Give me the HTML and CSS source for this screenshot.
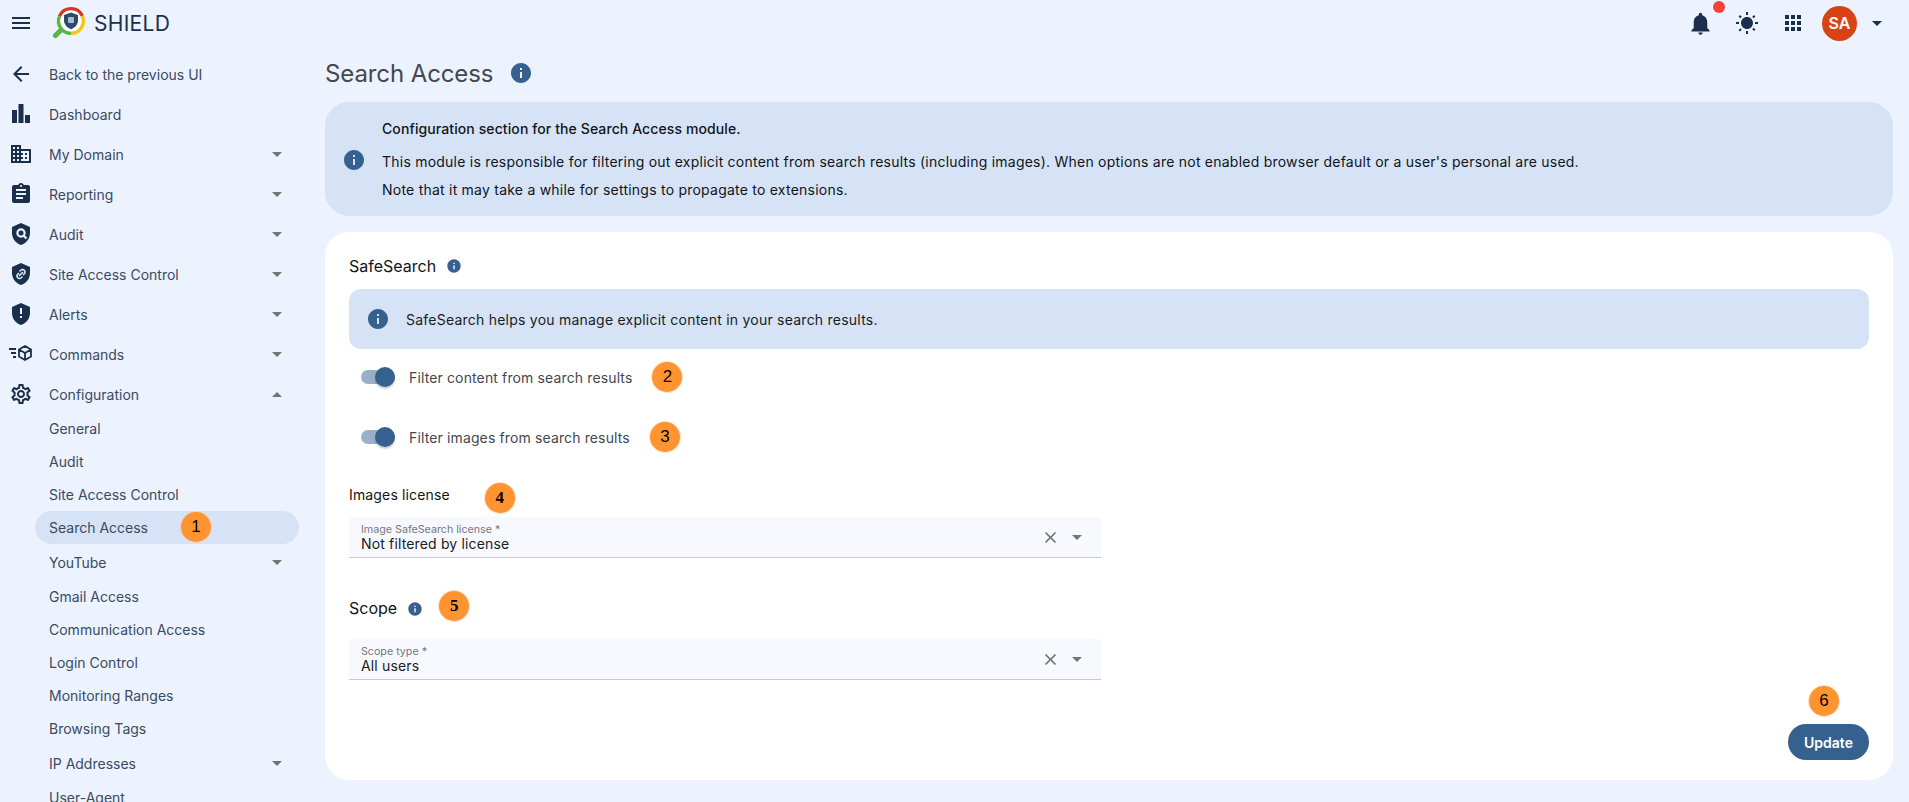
FILE: index.html
```html
<!DOCTYPE html>
<html lang="en">
<head>
<meta charset="utf-8">
<title>SHIELD - Search Access</title>
<link rel="stylesheet" href="styles.css">
</head>
<body>
<svg class="defs" aria-hidden="true">
  <symbol id="i-info" viewBox="0 0 24 24"><path d="M12 2C6.48 2 2 6.48 2 12s4.48 10 10 10 10-4.48 10-10S17.52 2 12 2zm1 15h-2v-6h2v6zm0-8h-2V7h2v2z"/></symbol>
  <symbol id="i-close" viewBox="0 0 24 24"><path d="M19 6.41 17.59 5 12 10.59 6.41 5 5 6.41 10.59 12 5 17.59 6.41 19 12 13.41 17.59 19 19 17.59 13.41 12z"/></symbol>
</svg>

<header class="topbar">
  <svg class="icon" viewBox="0 0 24 24"><path d="M3 18h18v-2H3v2zm0-5h18v-2H3v2zm0-7v2h18V6H3z"/></svg>
  <svg class="logo" viewBox="0 0 34 34">
    <path d="M9 24 3.5 29.5" stroke="#5cb346" stroke-width="5" stroke-linecap="round" fill="none"/>
    <circle cx="19" cy="15" r="13.5" fill="#fff"/>
    <path d="M7.4 10.5A12.4 12.4 0 0 1 30.3 10" stroke="#d8352a" stroke-width="3.4" fill="none"/>
    <path d="M30.3 10A12.4 12.4 0 0 1 19 27.4" stroke="#f5c518" stroke-width="3.4" fill="none"/>
    <path d="M19 27.4A12.4 12.4 0 0 1 7.4 10.5" stroke="#5cb346" stroke-width="3.4" fill="none"/>
    <path d="M19 6.5l7 2.6v5.2c0 4.3-3 7.6-7 8.9-4-1.300-7-4.600-7-8.900V9.100z" fill="#2c4a6b"/>
    <rect x="16" y="11" width="6" height="6" rx="1" fill="#a9bccf"/>
  </svg>
  <span class="brand">SHIELD</span>
  <div class="topbar-actions">
    <div class="bell">
      <svg class="bell-icon" viewBox="0 0 24 24"><path d="M12 22c1.100 0 2-.9 2-2h-4c0 1.100.89 2 2 2zm6-6v-5c0-3.070-1.640-5.640-4.500-6.320V4c0-.83-.67-1.500-1.500-1.500s-1.500.67-1.500 1.500v.68C7.630 5.360 6 7.920 6 11v5l-2 2v1h16v-1l-2-2z"/></svg>
      <span class="dot"></span>
    </div>
    <svg class="icon" viewBox="0 0 24 24"><path d="M6.760 5.840l-1.800-1.790-1.410 1.410 1.790 1.790 1.420-1.410zM4 11H1v2h3v-2zm9-10h-2v3h2V1zm7.450 4.460l-1.410-1.410-1.790 1.790 1.410 1.410 1.790-1.790zm-3.210 12.700l1.790 1.800 1.410-1.410-1.800-1.790-1.400 1.400zM20 11v2h3v-2h-3zm-8-5c-3.310 0-6 2.690-6 6s2.690 6 6 6 6-2.690 6-6-2.690-6-6-6zm-1 17h2v-3h-2v3zm-7.450-3.960l1.410 1.410 1.790-1.800-1.410-1.410-1.790 1.800z"/></svg>
    <svg class="icon" viewBox="0 0 24 24"><path d="M4 8h4V4H4v4zm6 12h4v-4h-4v4zm-6 0h4v-4H4v4zm0-6h4v-4H4v4zm6 0h4v-4h-4v4zm6-10v4h4V4h-4zm-6 4h4V4h-4v4zm6 6h4v-4h-4v4zm0 6h4v-4h-4v4z"/></svg>
    <span class="avatar">SA</span>
    <span class="caret caret-dark"></span>
  </div>
</header>

<div class="layout">
  <nav class="sidebar">
    <a class="nav-row"><svg class="icon" viewBox="0 0 24 24"><path d="M20 11H7.830l5.590-5.590L12 4l-8 8 8 8 1.410-1.410L7.830 13H20v-2z"/></svg><span class="nav-label">Back to the previous UI</span></a>
    <a class="nav-row"><svg class="icon" viewBox="0 0 24 24"><path d="M3 8h5v13H3zM9.500 2h5v19h-5zM16 13h5v8h-5z"/></svg><span class="nav-label">Dashboard</span></a>
    <a class="nav-row"><svg class="icon" viewBox="0 0 24 24"><path d="M12 7V3H2v18h20V7H12zM6 19H4v-2h2v2zm0-4H4v-2h2v2zm0-4H4V9h2v2zm0-4H4V5h2v2zm4 12H8v-2h2v2zm0-4H8v-2h2v2zm0-4H8V9h2v2zm0-4H8V5h2v2zm10 12h-8v-2h2v-2h-2v-2h2v-2h-2V9h8v10zm-2-8h-2v2h2v-2zm0 4h-2v2h2v-2z"/></svg><span class="nav-label">My Domain</span><span class="caret"></span></a>
    <a class="nav-row"><svg class="icon" viewBox="0 0 24 24"><path d="M19 3h-4.180C14.400 1.840 13.300 1 12 1c-1.300 0-2.400.84-2.820 2H5c-1.100 0-2 .9-2 2v14c0 1.100.9 2 2 2h14c1.100 0 2-.9 2-2V5c0-1.100-.9-2-2-2zm-7 0c.55 0 1 .45 1 1s-.45 1-1 1-1-.45-1-1 .45-1 1-1zm2 14H7v-2h7v2zm3-4H7v-2h10v2zm0-4H7V7h10v2z"/></svg><span class="nav-label">Reporting</span><span class="caret"></span></a>
    <a class="nav-row"><svg class="icon" viewBox="0 0 24 24"><path d="M12 1 3 5v6c0 5.550 3.840 10.740 9 12 5.160-1.260 9-6.450 9-12V5l-9-4z"/><circle class="cut" cx="12" cy="11" r="3.600"/><path class="cut" d="m14.500 13.500 3 3"/></svg><span class="nav-label">Audit</span><span class="caret"></span></a>
    <a class="nav-row"><svg class="icon" viewBox="0 0 24 24"><path d="M12 1 3 5v6c0 5.550 3.840 10.740 9 12 5.160-1.260 9-6.450 9-12V5l-9-4z"/><path class="cut thin" d="M10.500 9.500 12 8a2.500 2.500 0 0 1 3.500 3.500L14 13M13.500 14.500 12 16a2.500 2.500 0 0 1-3.500-3.500L10 11M10 14l4-4"/></svg><span class="nav-label">Site Access Control</span><span class="caret"></span></a>
    <a class="nav-row"><svg class="icon" viewBox="0 0 24 24"><path d="M12 1 3 5v6c0 5.550 3.840 10.740 9 12 5.160-1.260 9-6.450 9-12V5l-9-4zm1 15h-2v-2h2v2zm0-4h-2V6h2v6z"/></svg><span class="nav-label">Alerts</span><span class="caret"></span></a>
    <a class="nav-row"><svg class="icon" viewBox="0 0 24 24"><path class="line" d="M0 7h7M2 11h5M4 15h3M16 4l6 3.500v7L16 18l-6-3.500v-7zM10 7.500l6 3.500 6-3.500M16 11v7"/></svg><span class="nav-label">Commands</span><span class="caret"></span></a>
    <a class="nav-row"><svg class="icon" viewBox="0 0 24 24"><path d="M19.430 12.980c.04-.32.07-.64.07-.98 0-.34-.03-.66-.07-.98l2.110-1.650c.19-.15.24-.42.12-.64l-2-3.460c-.09-.16-.26-.25-.44-.25-.06 0-.12.01-.17.03l-2.490 1c-.52-.4-1.080-.73-1.690-.98l-.38-2.650C14.460 2.180 14.250 2 14 2h-4c-.25 0-.46.18-.49.42l-.38 2.650c-.61.25-1.170.59-1.690.98l-2.490-1c-.06-.02-.12-.03-.18-.03-.17 0-.34.09-.43.25l-2 3.460c-.13.22-.07.49.12.64l2.110 1.650c-.04.32-.07.65-.07.98 0 .33.03.66.07.98l-2.110 1.650c-.19.15-.24.42-.12.64l2 3.460c.09.16.26.25.44.25.06 0 .12-.01.17-.03l2.490-1c.52.4 1.080.73 1.690.98l.38 2.650c.03.24.24.42.49.42h4c.25 0 .46-.18.49-.42l.38-2.650c.61-.25 1.170-.59 1.690-.98l2.490 1c.06.02.12.03.18.03.17 0 .34-.09.43-.25l2-3.460c.12-.22.07-.49-.12-.64l-2.110-1.650zm-1.980-1.710c.04.31.05.52.05.73 0 .21-.02.43-.05.73l-.14 1.130.89.7 1.080.84-.7 1.210-1.270-.51-1.040-.42-.9.68c-.43.32-.84.56-1.250.73l-1.060.43-.16 1.130-.2 1.350h-1.400l-.19-1.350-.16-1.130-1.060-.43c-.43-.18-.83-.41-1.230-.71l-.91-.7-1.060.43-1.270.51-.7-1.210 1.080-.84.89-.7-.14-1.130c-.03-.31-.05-.54-.05-.74s.02-.43.05-.73l.14-1.130-.89-.7-1.080-.84.7-1.210 1.270.51 1.040.42.9-.68c.43-.32.84-.56 1.250-.73l1.060-.43.16-1.130.2-1.350h1.390l.19 1.350.16 1.130 1.060.43c.43.18.83.41 1.230.71l.91.7 1.060-.43 1.270-.51.7 1.210-1.070.85-.89.7.14 1.130zM12 8c-2.210 0-4 1.790-4 4s1.790 4 4 4 4-1.790 4-4-1.790-4-4-4zm0 6c-1.100 0-2-.9-2-2s.9-2 2-2 2 .9 2 2-.9 2-2 2z"/></svg><span class="nav-label">Configuration</span><span class="caret caret-up"></span></a>
    <div class="subnav">
      <a class="sub-row">General</a>
      <a class="sub-row">Audit</a>
      <a class="sub-row">Site Access Control</a>
      <a class="sub-row sub-active">Search Access<span class="step step-nav">1</span></a>
      <a class="sub-row sub-tall">YouTube<span class="caret"></span></a>
      <a class="sub-row">Gmail Access</a>
      <a class="sub-row">Communication Access</a>
      <a class="sub-row">Login Control</a>
      <a class="sub-row">Monitoring Ranges</a>
      <a class="sub-row">Browsing Tags</a>
      <a class="sub-row sub-tall">IP Addresses<span class="caret"></span></a>
      <a class="sub-row">User-Agent</a>
    </div>
  </nav>

  <main class="main">
    <div class="page-title">
      <h1>Search Access</h1>
      <svg class="info info-lg"><use href="#i-info"/></svg>
    </div>

    <section class="banner">
      <svg class="info info-lg"><use href="#i-info"/></svg>
      <div class="banner-text">
        <p class="banner-lead">Configuration section for the Search Access module.</p>
        <p class="banner-body">This module is responsible for filtering out explicit content from search results (including images). When options are not enabled browser default or a user's personal are used.</p>
        <p class="banner-note">Note that it may take a while for settings to propagate to extensions.</p>
      </div>
    </section>

    <section class="card">
      <div class="section-head">
        <h2>SafeSearch</h2>
        <svg class="info info-sm"><use href="#i-info"/></svg>
      </div>
      <div class="alert">
        <svg class="info info-lg"><use href="#i-info"/></svg>
        <span>SafeSearch helps you manage explicit content in your search results.</span>
      </div>
      <div class="toggle-row">
        <span class="toggle"><span class="thumb"></span></span>
        <span class="toggle-label">Filter content from search results</span>
        <span class="step">2</span>
      </div>
      <div class="toggle-row toggle-row-next">
        <span class="toggle"><span class="thumb"></span></span>
        <span class="toggle-label">Filter images from search results</span>
        <span class="step">3</span>
      </div>

      <div class="field-head field-head-license">
        <h3>Images license</h3>
        <span class="step step-serif">4</span>
      </div>
      <div class="field field-license">
        <div class="field-text">
          <span class="field-label">Image SafeSearch license *</span>
          <span class="field-value">Not filtered by license</span>
        </div>
        <svg class="clear"><use href="#i-close"/></svg>
        <span class="caret"></span>
      </div>

      <div class="field-head field-head-scope">
        <h2>Scope</h2>
        <svg class="info info-sm"><use href="#i-info"/></svg>
        <span class="step step-serif">5</span>
      </div>
      <div class="field field-scope">
        <div class="field-text">
          <span class="field-label">Scope type *</span>
          <span class="field-value">All users</span>
        </div>
        <svg class="clear"><use href="#i-close"/></svg>
        <span class="caret"></span>
      </div>

      <div class="card-actions">
        <span class="step step-action">6</span>
        <button class="btn" type="button">Update</button>
      </div>
    </section>
  </main>
</div>
</body>
</html>
```
FILE: styles.css
```css
* { box-sizing: border-box; }

html, body {
  margin: 0;
  height: 802px;
  overflow: hidden;
}

body {
  background: #ecf2fe;
  font-family: Inter, "Liberation Sans", sans-serif;
  font-size: 14px;
  color: #101418;
}

.defs { width: 0; height: 0; position: absolute; }

h1, h2, h3, p { margin: 0; font-weight: 400; }

.icon {
  width: 24px;
  height: 24px;
  flex: none;
  fill: #1a2f4b;
}

.icon .cut {
  fill: none;
  stroke: #ecf2fe;
  stroke-width: 2.2;
}

.icon .cut.thin { stroke-width: 1.4; }

.icon .line {
  fill: none;
  stroke: #1a2f4b;
  stroke-width: 1.8;
}

/* top bar */
.topbar {
  height: 46px;
  display: flex;
  align-items: center;
  padding: 0 27px 0 9px;
}

.logo {
  width: 34px;
  height: 34px;
  flex: none;
  margin-left: 19px;
}

.brand {
  margin-left: 8px;
  font-size: 21px;
  color: #1a2f4b;
  letter-spacing: 0.3px;
}

.topbar-actions {
  margin-left: auto;
  display: flex;
  align-items: center;
  gap: 22px;
}

.bell { position: relative; display: flex; }

.bell-icon {
  width: 27px;
  height: 27px;
  margin: 0 -1px 0 -2px;
  fill: #1a2f4b;
}

.dot {
  position: absolute;
  top: -9px;
  right: -12px;
  width: 12px;
  height: 12px;
  border-radius: 50%;
  background: #f44336;
}

.avatar {
  width: 35px;
  height: 35px;
  margin-left: -5px;
  margin-right: -7px;
  border-radius: 50%;
  background: #d84315;
  color: #fff;
  font-size: 16px;
  font-weight: 600;
  display: flex;
  align-items: center;
  justify-content: center;
}

.caret {
  width: 0;
  height: 0;
  flex: none;
  border-left: 5px solid transparent;
  border-right: 5px solid transparent;
  border-top: 5px solid #757575;
}

.caret-dark { border-top-color: #1a2f4b; }

.caret-up {
  border-top: 0;
  border-bottom: 5px solid #757575;
}

/* layout */
.layout { display: flex; height: 756px; }

.sidebar {
  width: 309px;
  flex: none;
  padding-top: 8px;
  overflow: hidden;
  color: #3a4a61;
}

.nav-row {
  height: 40px;
  display: flex;
  align-items: center;
  gap: 16px;
  padding: 0 27px 0 9px;
}

.nav-label { flex: 1; }

.subnav { margin-top: -2px; }

.sub-row {
  height: 33px;
  display: flex;
  align-items: center;
  justify-content: space-between;
  padding: 0 17px 0 14px;
  margin: 0 10px 0 35px;
  border-radius: 17px;
}

.sub-tall { height: 36px; }

.sub-active {
  background: #d6e3f7;
  justify-content: flex-start;
}

/* step markers */
.step {
  width: 30px;
  height: 30px;
  flex: none;
  border-radius: 50%;
  background: #ff9431;
  box-shadow: 0 0 0 1px rgba(255, 200, 150, 0.5);
  color: #000;
  font-family: "Liberation Sans", Arial, sans-serif;
  font-size: 17px;
  display: flex;
  align-items: center;
  justify-content: center;
}

.step-nav { margin-left: 33px; margin-top: -1px; }

.step-serif { font-family: "Liberation Serif", serif; font-weight: 700; }

/* main */
.main {
  flex: 1;
  min-width: 0;
  padding: 10px 16px 0;
}

.page-title {
  display: flex;
  align-items: center;
  gap: 16px;
  height: 32px;
  margin-top: 1px;
  margin-bottom: 13px;
}

h1 {
  font-size: 24px;
  line-height: 32px;
  color: #44474e;
  padding-top: 1px;
  letter-spacing: -0.1px;
}

.info { flex: none; fill: #36618e; }

.info-lg { width: 24px; height: 24px; }

.info-sm { width: 16px; height: 16px; }

.banner {
  display: flex;
  align-items: center;
  gap: 16px;
  padding: 16px 17px 15px 17px;
  background: #d6e3f7;
  border-radius: 24px;
  margin-bottom: 16px;
}

.banner-text {
  line-height: 22px;
  color: #111418;
  letter-spacing: 0.23px;
}

.banner-lead { font-weight: 500; margin-bottom: 11px; letter-spacing: 0.1px; }

.banner-body { margin-bottom: 6px; }

.card {
  height: 548px;
  padding: 22px 24px 20px;
  background: #fff;
  border-radius: 24px;
}

.section-head {
  display: flex;
  align-items: center;
  gap: 10px;
  height: 24px;
  margin-bottom: 11px;
}

h2, h3 {
  font-size: 16px;
  line-height: 24px;
  color: #111418;
}

h3 { font-size: 14px; letter-spacing: 0.15px; }

.alert {
  height: 60px;
  display: flex;
  align-items: center;
  gap: 16px;
  padding: 0 17px;
  background: #d6e3f7;
  border-radius: 12px;
  color: #191c20;
  letter-spacing: 0.23px;
  margin-bottom: 8px;
}

.toggle-row {
  height: 40px;
  display: flex;
  align-items: center;
  padding-left: 12px;
}

.toggle-row-next { margin-top: 20px; }

.toggle {
  position: relative;
  width: 34px;
  height: 14px;
  flex: none;
  border-radius: 7px;
  background: #9ab0c7;
}

.thumb {
  position: absolute;
  top: -3px;
  right: 0;
  width: 20px;
  height: 20px;
  border-radius: 50%;
  background: #36618e;
  box-shadow: 0 2px 2px rgba(0, 0, 0, 0.2);
}

.toggle-label {
  margin-left: 14px;
  margin-right: 20px;
  color: #44474e;
  letter-spacing: 0.13px;
}

.field-head {
  display: flex;
  align-items: flex-start;
}

.field-head-license { margin-top: 26px; gap: 35px; }

.field-head-scope { margin-top: 33px; }

.field-head-scope h2 { margin-top: 5px; }

.field-head-scope .info { margin: 10px 0 0 10px; }

.field-head-scope .step { margin-left: 16px; }

.field {
  width: 752px;
  height: 41px;
  display: flex;
  align-items: center;
  padding: 0 19px 0 12px;
  background: #f8f9ff;
  border-bottom: 1px solid #c8c9ce;
  border-radius: 4px 4px 0 0;
}

.field-license { margin-top: 4px; }

.field-scope { margin-top: 18px; }

.field-text {
  flex: 1;
  display: flex;
  flex-direction: column;
}

.field-label {
  font-size: 10.7px;
  line-height: 13px;
  color: #74777f;
}

.field-value {
  font-size: 14px;
  line-height: 15px;
  color: #191c20;
  letter-spacing: 0.15px;
}

.clear {
  width: 19px;
  height: 19px;
  flex: none;
  fill: #6b6d72;
  margin-right: 12px;
}

.card-actions {
  display: flex;
  flex-direction: column;
  align-items: flex-end;
  margin-top: 6px;
}

.step-action { margin-right: 30px; }

.btn {
  width: 81px;
  height: 36px;
  margin-top: 8px;
  border: 0;
  padding: 0;
  border-radius: 18px;
  background: #36618e;
  color: #fff;
  font-family: inherit;
  font-size: 14px;
  font-weight: 600;
}
```
